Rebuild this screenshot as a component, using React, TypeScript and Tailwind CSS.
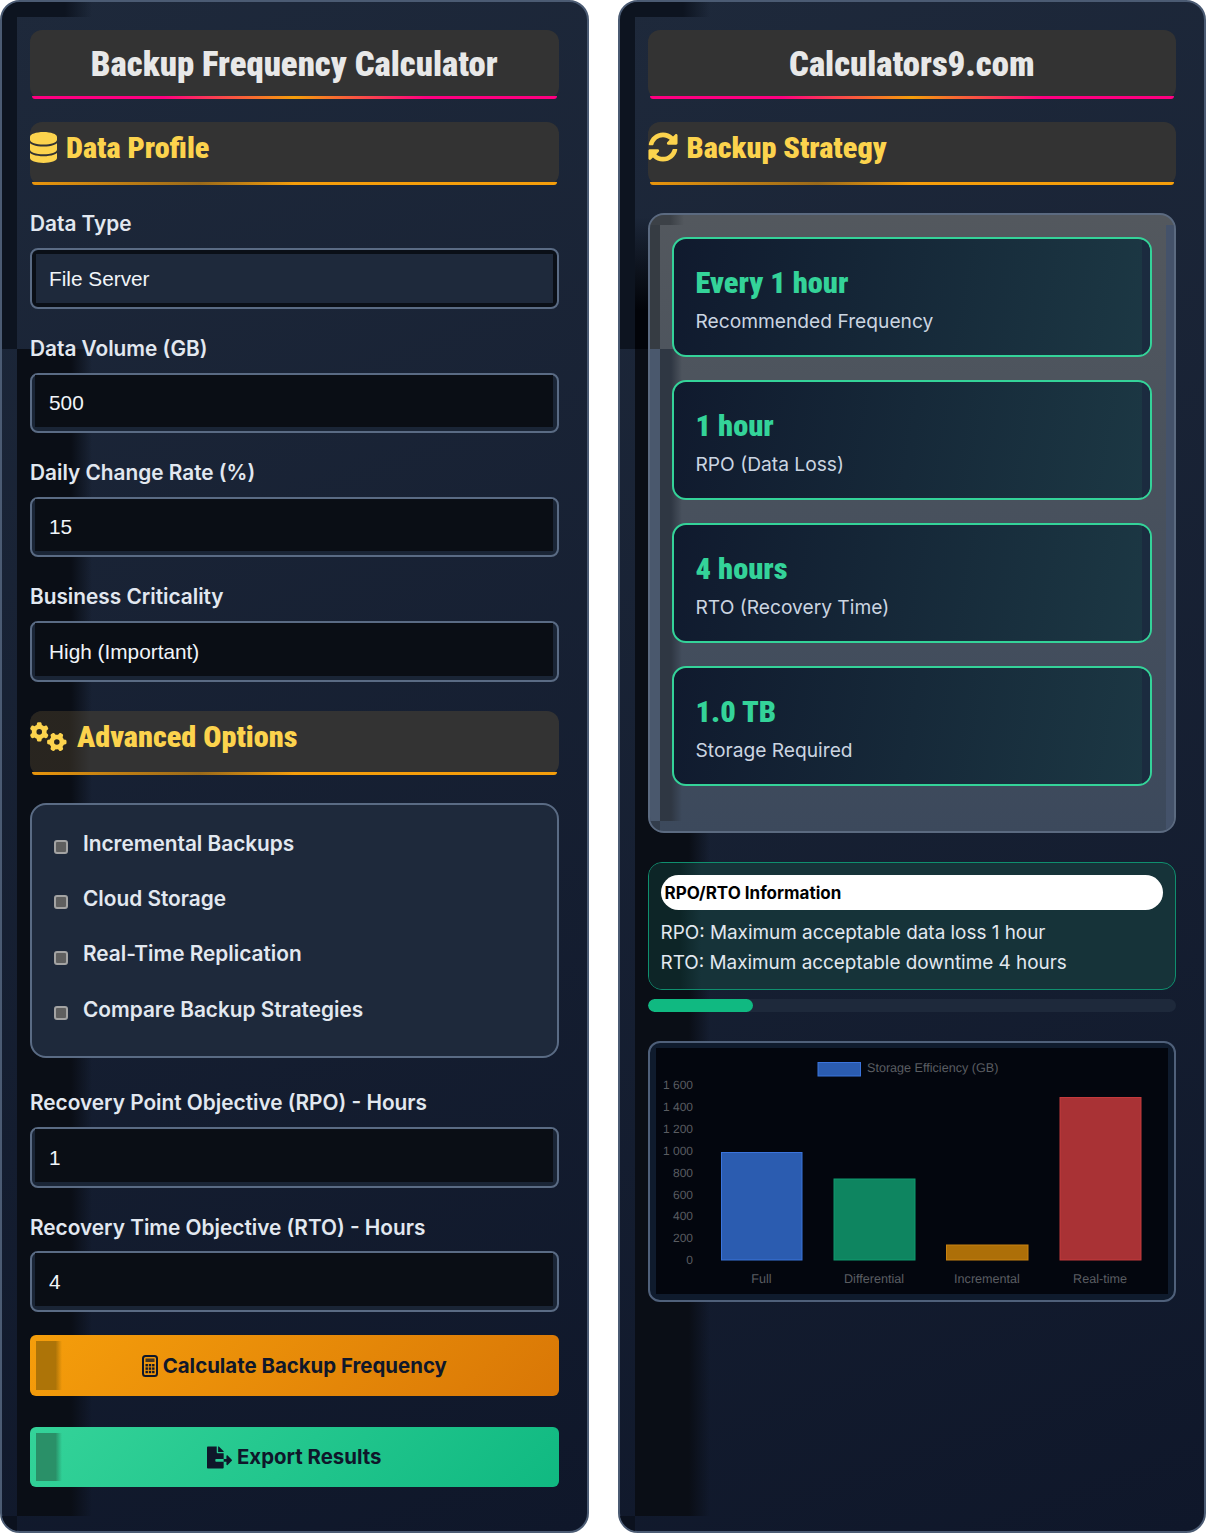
import React from "react";
import { FaSyncAlt, FaFileExport } from "react-icons/fa";
import { FaDatabase, FaGears } from "react-icons/fa6";

const condensed = "[font-family:Roboto,sans-serif] font-black font-stretch-[75%]";
const mono = "[font-family:'Liberation_Sans',sans-serif]";

function Panel({ children, extra }: { children: React.ReactNode; extra?: React.ReactNode }) {
  return (
    <div className="relative h-[1533px] overflow-hidden rounded-[20px] border-2 border-[#4b5b73] bg-[linear-gradient(160deg,#1e293b,#0f172a)] p-[28px]">
      <div className="absolute left-0 top-0 h-[15px] w-[90px] bg-[linear-gradient(90deg,#0d1420_70%,transparent)]" />
      <div className="absolute left-0 top-[15px] h-[332px] w-[15px] bg-[#0d1420]" />
      <div className="absolute bottom-[15px] left-[15px] top-[347px] w-[75px] bg-[linear-gradient(90deg,#0a0e16_72%,transparent)]" />
      <div className="absolute bottom-0 left-0 h-[15px] w-[15px] bg-[#0b111e]" />
      {extra}
      <div className="relative">{children}</div>
    </div>
  );
}

function Title({ text }: { text: string }) {
  return (
    <div className="relative flex h-[69px] items-center justify-center rounded-[12px] bg-[#333333]">
      <span className={`${condensed} text-[34.7px] leading-none text-[#e8e8e8]`}>{text}</span>
      <div className="absolute bottom-0 left-[2px] right-[2px] h-[3px] rounded-b-[12px] bg-[linear-gradient(90deg,#ff0080_25%,#f59e0b_50%,#ff0080_75%)]" />
    </div>
  );
}

function Section({
  icon,
  text,
  className,
  h,
  gap,
  dim,
}: {
  icon: React.ReactNode;
  text: string;
  className: string;
  h: string;
  gap: string;
  dim?: boolean;
}) {
  return (
    <div className={`relative rounded-[12px] bg-[#333333] ${h} ${className}`}>
      {dim && (
        <div className="absolute bottom-0 left-0 top-0 w-[60px] rounded-l-[12px] bg-[linear-gradient(90deg,rgba(28,20,8,0.45)_65%,transparent)]" />
      )}
      <div className={`relative flex h-[50px] items-center ${gap}`}>
        {icon}
        <span className={`${condensed} mt-[2px] text-[30.2px] leading-none text-[#fcd34d]`}>{text}</span>
      </div>
      <div className="absolute bottom-0 left-[2px] right-[2px] h-[3px] rounded-b-[12px] bg-[linear-gradient(90deg,#e8950c,#9a6a1a_32%,#f59e0b_50%,#f59e0b)]" />
    </div>
  );
}

function Label({ text, className }: { text: string; className: string }) {
  return (
    <div className={`h-[24px] text-[20.8px] font-semibold leading-[25px] text-[#e2e8f0] ${className}`}>{text}</div>
  );
}

function Input({ value, className, h }: { value: string; className: string; h: string }) {
  return (
    <div className={`flex rounded-[8px] border-2 border-[#5a6b84] bg-[#1a2536] pb-[4px] pl-[3px] pr-[4px] ${h} ${className}`}>
      <div className={`flex flex-1 items-center bg-[#0a0e15] pl-[14px] pt-[4px] text-[20.8px] text-[#f1f5f9] ${mono}`}>
        {value}
      </div>
    </div>
  );
}

function Select({ value, className, h }: { value: string; className: string; h: string }) {
  return (
    <div className={`flex rounded-[8px] border-2 border-[#5a6b84] bg-[#0a0f17] p-[4px] ${h} ${className}`}>
      <div className={`flex flex-1 items-center bg-[#1e293b] pl-[13px] text-[20.8px] text-[#f1f5f9] ${mono}`}>{value}</div>
    </div>
  );
}

function Check({ text, className }: { text: string; className: string }) {
  return (
    <div className={`flex h-[24px] items-center text-[20.8px] font-semibold leading-[24px] text-[#e2e8f0] ${className}`}>
      <span className="mr-[15px] mt-[8px] box-border h-[14px] w-[14px] rounded-[3px] border-2 border-[#a3a3a3] bg-[#5f5f5f]" />
      <span className="pt-[1px]">{text}</span>
    </div>
  );
}

function Btn({
  icon,
  text,
  className,
  h,
  bg,
  strip,
}: {
  icon: React.ReactNode;
  text: string;
  className: string;
  h: string;
  bg: string;
  strip: string;
}) {
  return (
    <div className={`relative flex items-center justify-center overflow-hidden rounded-[6px] ${h} ${bg} ${className}`}>
      <div className={`absolute bottom-[6px] left-[6px] top-[6px] w-[26px] ${strip}`} />
      <span className="relative flex items-center gap-[5px] pt-[1px] text-[20.4px] font-bold text-[#0f172a]">
        {icon}
        {text}
      </span>
    </div>
  );
}

function CalcIcon() {
  return (
    <svg width="16" height="22" viewBox="0 0 16 22" fill="none" className="shrink-0">
      <rect x="1" y="1" width="14" height="20" rx="2.5" stroke="#0f172a" strokeWidth="2" />
      <rect x="3.5" y="3.5" width="9" height="3.5" fill="#0f172a" fillOpacity="0.75" />
      <g fill="#0f172a">
        <rect x="3.5" y="9" width="2.4" height="2.4" />
        <rect x="6.8" y="9" width="2.4" height="2.4" />
        <rect x="10.1" y="9" width="2.4" height="2.4" />
        <rect x="3.5" y="12.4" width="2.4" height="2.4" />
        <rect x="6.8" y="12.4" width="2.4" height="2.4" />
        <rect x="10.1" y="12.4" width="2.4" height="2.4" />
        <rect x="3.5" y="15.8" width="2.4" height="2.4" />
        <rect x="6.8" y="15.8" width="2.4" height="2.4" />
        <rect x="10.1" y="15.8" width="2.4" height="2.4" />
      </g>
    </svg>
  );
}

function Card({ value, label }: { value: string; label: string }) {
  return (
    <div className="relative h-[120px] overflow-hidden rounded-[14px] border-2 border-[#34d399] bg-[linear-gradient(100deg,#101a2e,#1c3844)] pl-[22px]">
      <div className="absolute bottom-0 right-0 top-0 w-[8px] bg-[#1b2b3f]" />
      <div className={`${condensed} relative mt-[26px] text-[30.4px] leading-[36px] text-[#34d399]`}>{value}</div>
      <div className="relative mt-[6px] text-[19.2px] leading-[28px] text-[#cbd5e1]">{label}</div>
    </div>
  );
}

function Chart() {
  const ox = 656;
  const oy = 1048;
  const ticks = ["1 600", "1 400", "1 200", "1 000", "800", "600", "400", "200", "0"];
  const bars = [
    { x: 721.5, w: 80.5, top: 1152.5, f: "#2b5cb0", s: "#3b74dc" },
    { x: 834, w: 81, top: 1179, f: "#0e8560", s: "#0f9a6e" },
    { x: 946.5, w: 81.5, top: 1245, f: "#ad6f08", s: "#c98210" },
    { x: 1060, w: 81, top: 1097.5, f: "#a93235", s: "#c43a3d" },
  ];
  const labels = [
    { x: 761.5, t: "Full" },
    { x: 874, t: "Differential" },
    { x: 987, t: "Incremental" },
    { x: 1100, t: "Real-time" },
  ];
  return (
    <svg width="512" height="246" viewBox="0 0 512 246" className="block bg-[#03060e]">
      <g fontFamily="'Liberation Sans',sans-serif" fontSize="12.6" fill="#5a5d62" textRendering="geometricPrecision">
        <rect x={818 - ox} y={1062.5 - oy} width="42.5" height="13.5" fill="#2b5cb0" stroke="#3b74dc" strokeWidth="1" />
        <text x={867 - ox} y={1072 - oy}>Storage Efficiency (GB)</text>
        {ticks.map((t, i) => (
          <text key={t} x={693 - ox} y={1089.3 + i * 21.85 - oy} textAnchor="end" fontSize="12">
            {t}
          </text>
        ))}
        {bars.map((b) => (
          <rect
            key={b.x}
            x={b.x - ox}
            y={b.top - oy}
            width={b.w}
            height={1260 - b.top}
            fill={b.f}
            stroke={b.s}
            strokeWidth="1"
          />
        ))}
        {labels.map((l) => (
          <text key={l.t} x={l.x - ox} y={1283 - oy} textAnchor="middle">
            {l.t}
          </text>
        ))}
      </g>
    </svg>
  );
}

export default function App() {
  return (
    <div className="grid h-[1533px] w-[1206px] grid-cols-[588.5px_588.5px] gap-[29px] bg-white [font-family:Inter,sans-serif]">
      <Panel>
        <Title text="Backup Frequency Calculator" />
        <Section
          className="mt-[23px]"
          h="h-[63px]"
          gap="gap-[9px]"
          text="Data Profile"
          icon={<FaDatabase className="h-[31px] w-[27px] text-[#fcd34d]" />}
        />
        <Label text="Data Type" className="mt-[26px]" />
        <Select value="File Server" className="mt-[13px]" h="h-[61px]" />
        <Label text="Data Volume (GB)" className="mt-[27px]" />
        <Input value="500" className="mt-[13px]" h="h-[60px]" />
        <Label text="Daily Change Rate (%)" className="mt-[27px]" />
        <Input value="15" className="mt-[13px]" h="h-[60px]" />
        <Label text="Business Criticality" className="mt-[27px]" />
        <Input value="High (Important)" className="mt-[13px]" h="h-[61px]" />
        <Section
          dim
          className="mt-[29px]"
          h="h-[64px]"
          gap="gap-[10px]"
          text="Advanced Options"
          icon={<FaGears size={37} className="text-[#fcd34d]" />}
        />
        <div className="mt-[28px] h-[255px] rounded-[16px] border-2 border-[#5a6b84] bg-[#1e293b] pl-[22px] pt-[26px]">
          <Check text="Incremental Backups" className="" />
          <Check text="Cloud Storage" className="mt-[31px]" />
          <Check text="Real-Time Replication" className="mt-[31.5px]" />
          <Check text="Compare Backup Strategies" className="mt-[31.5px]" />
        </div>
        <Label text="Recovery Point Objective (RPO) - Hours" className="mt-[32px]" />
        <Input value="1" className="mt-[13px]" h="h-[61px]" />
        <Label text="Recovery Time Objective (RTO) - Hours" className="mt-[27px]" />
        <Input value="4" className="mt-[12px]" h="h-[61px]" />
        <Btn
          className="mt-[23px]"
          h="h-[61px]"
          bg="bg-[linear-gradient(135deg,#f59e0b,#d97706)]"
          strip="bg-[linear-gradient(90deg,#ad7408_75%,transparent)]"
          text="Calculate Backup Frequency"
          icon={<CalcIcon />}
        />
        <Btn
          className="mt-[31px]"
          h="h-[60px]"
          bg="bg-[linear-gradient(135deg,#34d399,#10b981)]"
          strip="bg-[linear-gradient(90deg,#2a9068_75%,transparent)]"
          text="Export Results"
          icon={<FaFileExport size={25} />}
        />
      </Panel>

      <Panel
        extra={
          <div className="absolute left-[15px] top-[215px] h-[132px] w-[30px] bg-[linear-gradient(180deg,transparent,#020409_70%)]" />
        }
      >
        <Title text="Calculators9.com" />
        <Section
          className="mt-[23px]"
          h="h-[63px]"
          gap="gap-[9px]"
          text="Backup Strategy"
          icon={<FaSyncAlt size={30} className="text-[#fcd34d]" />}
        />
        <div className="relative mt-[28px] h-[620px] overflow-hidden rounded-[16px] border-2 border-[#5b6a80] bg-[linear-gradient(180deg,#53585e,#3c495c)] pl-[22px] pr-[22px] pt-[22px]">
          <div className="absolute right-0 top-[10px] bottom-0 w-[8px] bg-[#44526a]" />
          <div className="absolute left-0 top-0 h-[10px] w-[34px] bg-[linear-gradient(90deg,#3c4147_60%,transparent)]" />
          <div className="absolute left-0 top-[10px] h-[124px] w-[10px] bg-[#363c43]" />
          <div className="absolute left-0 top-[134px] bottom-[10px] w-[10px] bg-[#4a586d]" />
          <div className="absolute left-[10px] top-[134px] bottom-[10px] w-[22px] bg-[linear-gradient(90deg,#2f3743_50%,transparent)]" />
          <div className="absolute bottom-0 left-0 h-[10px] w-[10px] bg-[#333d4c]" />
          <div className="relative flex flex-col gap-[23px]">
            <Card value="Every 1 hour" label="Recommended Frequency" />
            <Card value="1 hour" label="RPO (Data Loss)" />
            <Card value="4 hours" label="RTO (Recovery Time)" />
            <Card value="1.0 TB" label="Storage Required" />
          </div>
        </div>
        <div className="relative mt-[29px] h-[128px] overflow-hidden rounded-[14px] border border-[#0f8f6e] bg-[#163339] px-[12px] pt-[12px]">
          <div className="absolute bottom-0 left-0 top-0 w-[52px] bg-[linear-gradient(90deg,#0d2527_60%,transparent)]" />
          <div className="relative flex h-[35px] items-center rounded-[18px] bg-white pl-[4px] pt-[2px] text-[17px] font-bold text-black">
            RPO/RTO Information
          </div>
          <div className="relative mt-[8px] text-[18.9px] leading-[30px] text-[#e2e8f0]">
            <div>RPO: Maximum acceptable data loss 1 hour</div>
            <div>RTO: Maximum acceptable downtime 4 hours</div>
          </div>
        </div>
        <div className="mt-[9px] h-[13px] overflow-hidden rounded-full bg-[#1e293b]">
          <div className="h-full w-[20%] rounded-full bg-[#10b981]" />
        </div>
        <div className="mt-[29px] h-[261px] rounded-[12px] border-2 border-[#4f607a] bg-[#0f1b2d] pl-[6px] pt-[5px]">
          <Chart />
        </div>
      </Panel>
    </div>
  );
}
